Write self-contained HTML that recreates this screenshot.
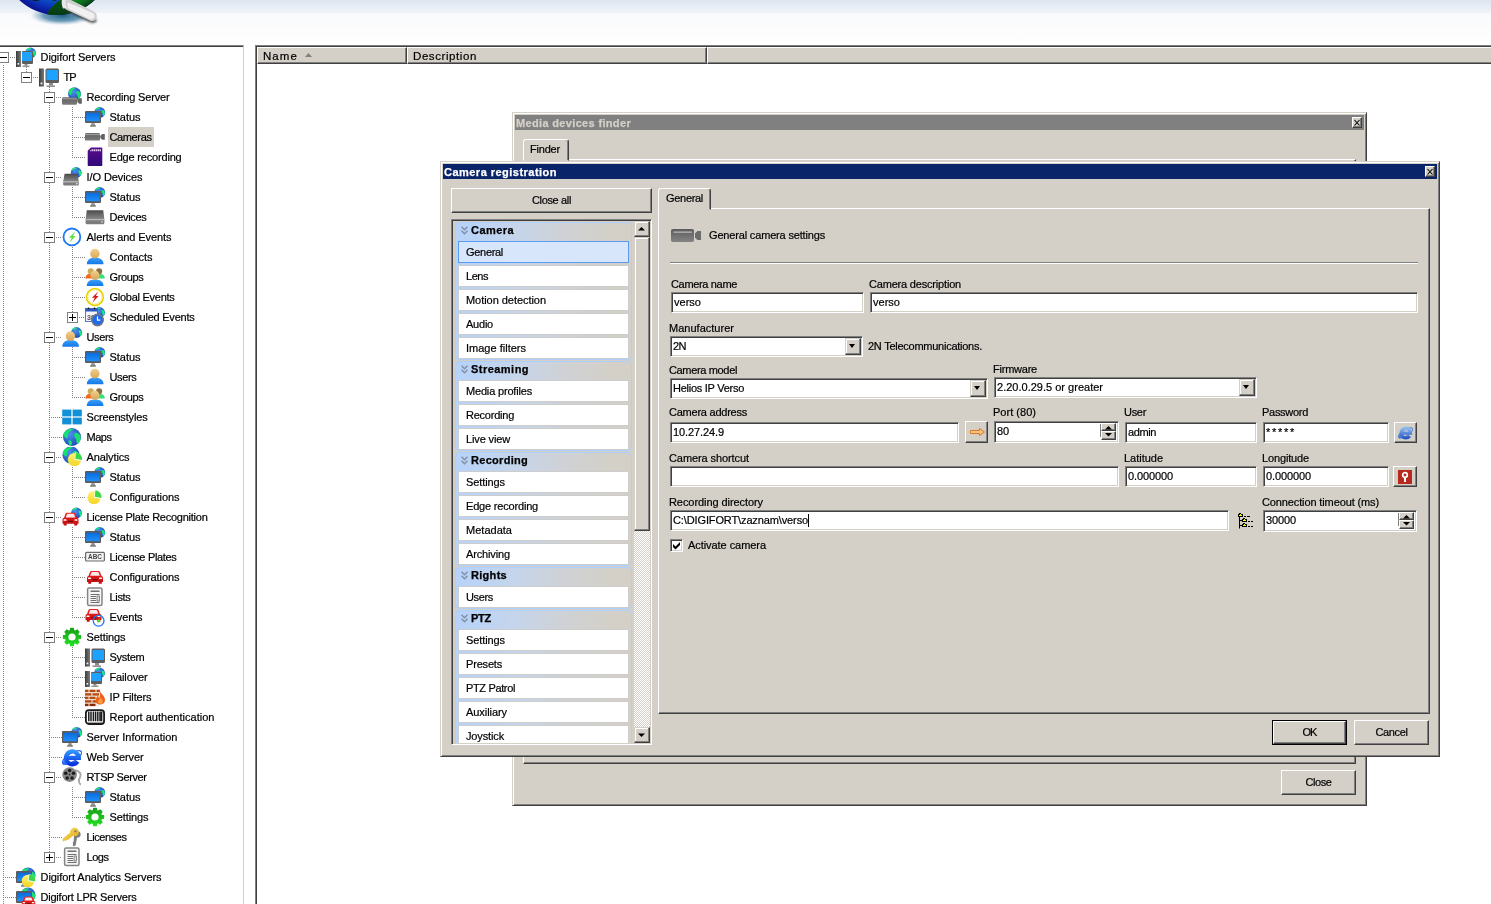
<!DOCTYPE html><html><head><meta charset="utf-8"><title>Digifort</title><style>
*{box-sizing:border-box}
html,body{margin:0;padding:0}
body{width:1491px;height:904px;overflow:hidden;background:#fff;position:relative;font-family:"Liberation Sans",sans-serif;font-size:11px;color:#000;line-height:1;-webkit-text-stroke:0.2px #000}
.abs,.ic,.tt,.hd,.vd,.xb,.lbl,.ed,.btn,.win,.cb,.grp,.gh,.it{position:absolute}
i{display:block;font-style:normal}
#root{position:absolute;left:0;top:0;width:1491px;height:904px;overflow:hidden;will-change:transform}
#topband{position:absolute;left:0;top:0;width:1491px;height:45px;background:linear-gradient(#dee5f1 0px,#e6ecf5 6px,#eef2f8 12px,#f9fafc 14px,#fcfcfd 28px,#fff 45px)}
#treep{position:absolute;left:0;top:45px;width:244px;height:859px;background:#fff;border-top:1px solid #848484;border-right:1px solid #d4d0c8;overflow:hidden}
#treep:before{content:"";position:absolute;left:0;top:0;width:243px;height:1px;background:#404040}
#tree{position:absolute;left:0;top:-46px;width:244px;height:904px}
.tt{height:20px;line-height:21px;padding:0 0 0 1.5px;white-space:pre;font-size:11px}
.tt.sel{background:#d4d0c8}
.hd{height:1px;background-image:linear-gradient(90deg,#808080 50%,transparent 50%);background-size:2px 1px}
.vd{width:1px;background-image:linear-gradient(#808080 50%,transparent 50%);background-size:1px 2px}
.xb{width:11px;height:11px;border:1px solid #808080;background:#fff;z-index:2}
.xb b{position:absolute;left:1px;top:4px;width:7px;height:1px;background:#000}
.xb u{position:absolute;left:4px;top:1px;width:1px;height:7px;background:#000}
#listp{position:absolute;left:255px;top:45px;width:1240px;height:870px;background:#fff;border:1px solid #808080;box-shadow:inset 1px 1px 0 #404040}
#hdr{position:absolute;left:1px;top:1px;height:17px;width:1240px;background:#d4d0c8}
.hc{position:absolute;top:0;height:17px;background:#d4d0c8;border:1px solid;border-color:#fff #404040 #404040 #fff;box-shadow:inset -1px -1px 0 #808080;line-height:16px;padding-left:5px;white-space:pre}
.win{background:#d4d0c8;border:1px solid;border-color:#d4d0c8 #404040 #404040 #d4d0c8;box-shadow:inset 1px 1px 0 #fff,inset -1px -1px 0 #808080}
.title{position:absolute;left:2px;top:2px;right:2px;height:15px;color:#fff;font-weight:bold;line-height:17px;height:15px;padding-left:1px;white-space:pre;font-size:11px;-webkit-text-stroke:0.25px}
.close{position:absolute;right:2px;top:2px;width:10px;height:11px;background:#d4d0c8;border:1px solid;border-color:#fff #404040 #404040 #fff;box-shadow:inset -1px -1px 0 #808080}
.btn{background:#d4d0c8;border:1px solid;border-color:#fff #404040 #404040 #fff;box-shadow:inset -1px -1px 0 #808080,inset 1px 1px 0 #d4d0c8;text-align:center;white-space:pre}
.btn.sb{border-color:#d4d0c8 #404040 #404040 #d4d0c8;box-shadow:inset -1px -1px 0 #808080,inset 1px 1px 0 #fff}
.ed{background:#fff;border:1px solid;border-color:#808080 #fff #fff #808080;box-shadow:inset 1px 1px 0 #404040,inset -1px -1px 0 #d4d0c8;white-space:pre;padding-left:2px;overflow:hidden}
.lbl{white-space:pre;height:13px;line-height:13px}
.tab{position:absolute;background:#d4d0c8;border:1px solid;border-color:#fff #404040 transparent #fff;border-radius:3px 3px 0 0;box-shadow:inset -1px 0 0 #808080;text-align:left;white-space:pre}
.page{position:absolute;border:1px solid;border-color:#fff #404040 #404040 #fff;box-shadow:inset -1px -1px 0 #808080}
.dd{position:absolute;width:16px;background:#d4d0c8;border:1px solid;border-color:#d4d0c8 #404040 #404040 #d4d0c8;box-shadow:inset -1px -1px 0 #808080,inset 1px 1px 0 #fff}
.dd:after{content:"";position:absolute;left:3px;top:5px;width:0;height:0;border-style:solid;border-color:#000 transparent transparent transparent;border-width:4px 3.5px 0 3.5px}
.grp{left:455px;width:177px;border:1px solid #acd0ff;border-radius:4px;background:linear-gradient(90deg,#b6d3fa 0%,#c6d5ea 35%,#d0d1d3 65%,#d4d0c8 90%)}
.gh{left:456px;width:175px;height:18px;font-weight:bold;font-size:11px;line-height:17px;-webkit-text-stroke:0.25px #000}
.gh .chev{position:absolute;left:5px;top:4px}
.gh span{position:absolute;left:15px;top:0;white-space:pre}
.it{left:458px;width:171px;height:22px;background:#fff;border:1px solid #cdcdcd;line-height:20px;padding-left:7px;white-space:pre}
.it.sel{background:#d8e6fc;border-color:#5a9cf2}
</style></head><body><div id="root">
<svg width="0" height="0" style="position:absolute"><defs>
<linearGradient id="gGray" x1="0" y1="0" x2="0" y2="1"><stop offset="0" stop-color="#4a4a4a"/><stop offset="1" stop-color="#8a8a8a"/></linearGradient>
<linearGradient id="gGrayH" x1="0" y1="0" x2="1" y2="0"><stop offset="0" stop-color="#3c3c3c"/><stop offset="1" stop-color="#7a7a7a"/></linearGradient>
<linearGradient id="gScr" x1="0" y1="0" x2="0" y2="1"><stop offset="0" stop-color="#0a6ad6"/><stop offset="1" stop-color="#1e90ff"/></linearGradient>
<radialGradient id="gGlobe" cx="0.4" cy="0.35" r="0.7"><stop offset="0" stop-color="#4f8ff0"/><stop offset="1" stop-color="#1a48b8"/></radialGradient>
<linearGradient id="gSD" x1="0" y1="0" x2="0" y2="1"><stop offset="0" stop-color="#5a0a8c"/><stop offset="1" stop-color="#2e0a7a"/></linearGradient>
<linearGradient id="gSkin" x1="0" y1="0" x2="0" y2="1"><stop offset="0" stop-color="#f2cf8c"/><stop offset="1" stop-color="#d9a65a"/></linearGradient>
<linearGradient id="gBlue" x1="0" y1="0" x2="0" y2="1"><stop offset="0" stop-color="#3aa0ff"/><stop offset="1" stop-color="#1478e6"/></linearGradient>
<linearGradient id="gGreen" x1="0" y1="0" x2="0" y2="1"><stop offset="0" stop-color="#18a018"/><stop offset="1" stop-color="#22e022"/></linearGradient>
<linearGradient id="gRed" x1="0" y1="0" x2="0" y2="1"><stop offset="0" stop-color="#f02020"/><stop offset="1" stop-color="#c01010"/></linearGradient>
<linearGradient id="gYel" x1="0" y1="0" x2="0" y2="1"><stop offset="0" stop-color="#fff27a"/><stop offset="1" stop-color="#f5d420"/></linearGradient>
<linearGradient id="gIE" x1="0" y1="0" x2="0" y2="1"><stop offset="0" stop-color="#2f92ff"/><stop offset="1" stop-color="#0a34e0"/></linearGradient><linearGradient id="gIE2" x1="0" y1="0" x2="0" y2="1"><stop offset="0" stop-color="#8ab8f2"/><stop offset="1" stop-color="#2a58c4"/></linearGradient><linearGradient id="gGray2" x1="0" y1="0" x2="0" y2="1"><stop offset="0" stop-color="#5c5c5c"/><stop offset="1" stop-color="#848484"/></linearGradient><linearGradient id="gKey" x1="0" y1="0" x2="1" y2="1"><stop offset="0" stop-color="#ffe36a"/><stop offset="1" stop-color="#d9a514"/></linearGradient>
<linearGradient id="gCam" x1="0" y1="0" x2="0" y2="1"><stop offset="0" stop-color="#5c5c5c"/><stop offset="0.2" stop-color="#9a9a9a"/><stop offset="0.35" stop-color="#686868"/><stop offset="1" stop-color="#7c7c7c"/></linearGradient>
<g id="globe_s"><circle cx="0" cy="0" r="5.400" fill="url(#gGlobe)"/><path d="M-4.400 -3C-3 -5 -0.500 -5.300 1 -4.600C0 -3.700 -1.600 -3.600 -2.600 -2.800C-3.200 -2.200 -3.800 -2.200 -4.400 -3Z" fill="#14ee78"/><path d="M2.400 -2.400C3.600 -2.800 4.800 -1.800 5.100 -0.200C5.400 1.600 4.600 3.200 3.400 4C3 3 3.400 1.800 2.800 0.800C2.200 -0.200 2 -1.400 2.400 -2.400Z" fill="#14ee78"/></g>
<g id="globe_m"><circle cx="0" cy="0" r="6.5" fill="url(#gGlobe)"/><path d="M-5.6 -3.2C-4 -5.8 -1 -6.4 0.8 -5.6C-0.4 -4.4 -1.8 -3.8 -2.4 -2.2C-2.8 -0.8 -2.6 0.8 -3.6 1.6C-4.6 1.2 -5.8 0 -6.2 -1.2Z" fill="#18e070"/><path d="M2 -2.6C3.6 -3.4 5.4 -2.4 6.2 -0.4C6.6 2 5.6 4.2 3.8 5.2C3 3.8 3.6 2 2.6 0.8C1.8 -0.2 1.4 -1.6 2 -2.6Z" fill="#18e070"/></g>
<g id="mon_s"><rect x="0" y="4" width="16" height="12" rx="1" fill="#5e5a58"/><rect x="1.200" y="5.600" width="13.600" height="8.600" fill="url(#gScr)"/><path d="M6.500 16H9.500L10 17.500H6Z" fill="#a0a0a0"/><path d="M5 19.800C5 17.800 6.500 17.200 8 17.200C9.500 17.200 11 17.800 11 19.800Z" fill="#808080"/></g>
<g id="tower"><rect x="0" y="0" width="5" height="16" fill="url(#gGrayH)"/><rect x="1.500" y="12" width="1.600" height="1.600" fill="#eee"/></g>
<g id="car"><path d="M3.500 8.500L5 4.600C5.300 3.800 6 3.500 6.800 3.500H13.200C14 3.500 14.700 3.800 15 4.600L16.500 8.500C17.600 8.800 18 9.500 18 10.500V14.500H16.800V16.200H13.800V14.500H6.200V16.200H3.200V14.500H2V10.500C2 9.500 2.400 8.800 3.500 8.500Z" fill="url(#gRed)"/><path d="M5.200 8.200L6.300 5.200C6.400 4.800 6.700 4.600 7.100 4.600H12.900C13.300 4.600 13.600 4.800 13.700 5.200L14.800 8.200Z" fill="#fbeaea"/><rect x="3" y="10" width="3" height="1.600" rx="0.500" fill="#fff"/><rect x="14" y="10" width="3" height="1.600" rx="0.500" fill="#fff"/><rect x="7.500" y="11.500" width="5" height="1.300" fill="#7a0808"/></g>
<g id="person"><path d="M1.800 17.200C1.800 12.600 5 10.400 10 10.400C15 10.400 18.500 12.600 18.500 17.200Z" fill="url(#gBlue)"/><ellipse cx="9.900" cy="6.600" rx="4.700" ry="4.900" fill="url(#gSkin)"/></g>
<g id="pie"><circle cx="0" cy="0" r="6.600" fill="url(#gYel)"/><path d="M0 0L0.800 -7.400A7.400 7.400 0 0 1 7.300 1.600Z" fill="#fff"/><path d="M0.800 -0.800L1.400 -7.200A7 7 0 0 1 7.600 0.400Z" fill="#38d848"/></g>
<g id="bolt"><path d="M3 -5.600L-3.200 0.600H-0.400L-2.800 5.600L3.400 -1.200H0.600Z"/></g>
<symbol id="i_srvmon_g" viewBox="0 0 20 20" overflow="visible"><use href="#globe_s" x="14.5" y="6"/><use href="#tower" x="0" y="4"/><rect x="6" y="4" width="11" height="13" rx="1" fill="#5e5e5e"/><rect x="6" y="5" width="10" height="9" fill="#1ea2ff"/><path d="M8.500 17H11.500V18.600H8.500Z" fill="#8a8a8a"/><rect x="6.500" y="18.600" width="7" height="1.200" fill="#7a7a7a"/></symbol><symbol id="i_srvmon_g2" viewBox="0 0 20 20" overflow="visible"><use href="#globe_s" x="14.500" y="6"/><use href="#tower" x="0" y="4"/><rect x="6" y="5" width="11" height="12" rx="1" fill="#5e5e5e"/><rect x="6" y="6" width="10" height="8" fill="#1ea2ff"/><path d="M8.500 17H11.500V18.600H8.500Z" fill="#8a8a8a"/><rect x="6.500" y="18.600" width="7" height="1.200" fill="#7a7a7a"/></symbol><symbol id="i_srvmon" viewBox="0 0 20 20" overflow="visible"><rect x="0" y="1.500" width="5" height="18" fill="url(#gGrayH)"/><rect x="1.500" y="15.500" width="1.800" height="1.800" fill="#eee"/><rect x="6.500" y="1.500" width="13.500" height="14.500" rx="1.500" fill="#5e5e5e"/><rect x="7.500" y="3" width="11.500" height="10" fill="#1ea2ff"/><path d="M10 16H14V18.500H10Z" fill="#8a8a8a"/><rect x="7.500" y="18.500" width="8.500" height="1.300" fill="#7a7a7a"/></symbol><symbol id="i_cam_g" viewBox="0 0 20 20" overflow="visible"><use href="#globe_m" x="12.500" y="6.800"/><rect x="0" y="10.2" width="15" height="7.600" rx="1.200" fill="url(#gCam)"/><path d="M15.300 13L17.300 11.2H19.800V16.8H17.300L15.300 15Z" fill="#626262"/></symbol><symbol id="i_cam" viewBox="0 0 20 20" overflow="visible"><rect x="0" y="6" width="15" height="7.600" rx="1.200" fill="url(#gCam)"/><path d="M15.300 8.8L17.300 7H19.800V12.8H17.300L15.300 11Z" fill="#626262"/></symbol><symbol id="i_cam_big" viewBox="0 0 32 20" overflow="visible"><rect x="1" y="4" width="23" height="13" rx="1.800" fill="url(#gGray2)"/><rect x="3.500" y="6.600" width="18.500" height="1" fill="#d2cec8"/><path d="M25 8.200L27.500 6H31V15H27.500L25 12.800Z" fill="#6c6c6c"/></symbol><symbol id="i_mon_g" viewBox="0 0 20 20" overflow="visible"><use href="#globe_s" x="14.700" y="5.400"/><use href="#mon_s"/></symbol><symbol id="i_sd" viewBox="0 0 20 20" overflow="visible"><path d="M6 0.500H16.300C16.900 0.500 17.300 0.900 17.300 1.500V18C17.300 18.600 16.900 19 16.300 19H3.700C3.100 19 2.700 18.600 2.700 18V3.800Z" fill="url(#gSD)"/><path d="M5 3.200h0.800v1H5zM6.600 2.200h1.200v2H6.600zM8.600 2.200h1.200v2H8.600zM10.600 2.200h1.200v2h-1.200zM12.600 2.200h1.200v2h-1.200zM14.600 2.200h1.200v2h-1.200z" fill="#fff"/></symbol><symbol id="i_dev_g" viewBox="0 0 20 20" overflow="visible"><use href="#globe_s" x="14.200" y="5.500"/><path d="M2.6 6.8H15.6L16.8 14.6H1.2Z" fill="url(#gGray)"/><path d="M1.2 14.6H16.8V17C16.8 18.6 15.8 18.6 15.8 18.6H2.2C1.2 18.6 1.2 17 1.2 17Z" fill="#7c7c7c"/><rect x="1.2" y="14.6" width="15.6" height="0.800" fill="#c8c8c8"/><circle cx="14.8" cy="16.8" r="0.700" fill="#fff"/></symbol><symbol id="i_dev" viewBox="0 0 20 20" overflow="visible"><path d="M1.8 3.2H18.2L19.4 12.4H0.6Z" fill="url(#gGray)"/><path d="M0.6 12.4H19.4V15.4C19.4 17.2 18.2 17.2 18.2 17.2H1.8C0.6 17.2 0.6 15.4 0.6 15.4Z" fill="#7c7c7c"/><rect x="0.6" y="12.4" width="18.8" height="0.800" fill="#c8c8c8"/><circle cx="17" cy="15" r="0.700" fill="#fff"/></symbol><symbol id="i_alert" viewBox="0 0 20 20" overflow="visible"><circle cx="9.900" cy="9.900" r="8.400" fill="#fff" stroke="#1e78f5" stroke-width="1.800"/><use href="#bolt" x="10.200" y="10.100" fill="#5ae03a"/></symbol><symbol id="i_gevent" viewBox="0 0 20 20" overflow="visible"><circle cx="9.900" cy="10" r="8.400" fill="#fff" stroke="#e6d40a" stroke-width="1.700"/><circle cx="9.900" cy="10" r="7.100" fill="none" stroke="#f4ea70" stroke-width="0.800"/><use href="#bolt" x="10.200" y="10.100" fill="#d81818"/></symbol><symbol id="i_person" viewBox="0 0 20 20" overflow="visible"><use href="#person"/></symbol><symbol id="i_person_g" viewBox="0 0 20 20" overflow="visible"><use href="#globe_s" x="14.500" y="5.500"/><g transform="translate(-1.500,2.500)"><use href="#person"/></g></symbol><symbol id="i_group" viewBox="0 0 20 20" overflow="visible"><path d="M0.400 11.400C0.400 8.600 2.200 6.800 5.500 6.800L7.500 11.400Z" fill="#f06a1a"/><path d="M19.800 11.400C19.800 8.600 18 6.800 14.500 6.800L12.500 11.400Z" fill="#38e070"/><ellipse cx="5.800" cy="4.300" rx="3.100" ry="3.100" fill="#c8ae5c"/><ellipse cx="14.100" cy="4.300" rx="3.100" ry="3.100" fill="#8a7040"/><path d="M1.800 18.900C1.800 14.400 5 12.400 10 12.400C15 12.400 18.500 14.400 18.500 18.900Z" fill="url(#gBlue)"/><ellipse cx="9.950" cy="8.200" rx="4.450" ry="4.650" fill="url(#gSkin)"/></symbol><symbol id="i_sched" viewBox="0 0 20 20" overflow="visible"><use href="#globe_s" x="14.500" y="5.500"/><rect x="0.500" y="1.500" width="12" height="13" fill="#f4f4f8" stroke="#2a5cc0" stroke-width="0.800"/><rect x="0.500" y="1.500" width="12" height="3" fill="#2a5cc0"/><circle cx="3.500" cy="1.300" r="0.900" fill="#111"/><circle cx="9.500" cy="1.300" r="0.900" fill="#111"/><text x="2" y="12.500" font-size="7" font-family="Liberation Sans" font-weight="bold" fill="#555">30</text><circle cx="12.500" cy="13" r="5.800" fill="#1e6af0" stroke="#777" stroke-width="1.400"/><path d="M12.500 9.600V13.200H15.300" fill="none" stroke="#fff" stroke-width="1.200"/></symbol><symbol id="i_win" viewBox="0 0 20 20" overflow="visible"><rect x="0.200" y="2.600" width="9.200" height="6.800" fill="#1190d8"/><rect x="10.600" y="2.600" width="9.200" height="6.800" fill="#1190d8"/><rect x="0.200" y="10.600" width="9.200" height="6.800" fill="#1190d8"/><rect x="10.600" y="10.600" width="9.200" height="6.800" fill="#1190d8"/></symbol><symbol id="i_globe" viewBox="0 0 20 20" overflow="visible"><circle cx="10" cy="10" r="9" fill="url(#gGlobe)"/><path d="M2.200 5.600C4.400 2.200 8.600 1 11.400 2C9.600 3.800 7.400 4.400 6.400 6.600C5.800 8.400 6.400 10.400 5 11.600C3.400 11 1.800 9.600 1.400 7.800Z" fill="#18e070"/><path d="M12.600 6.200C14.800 5 17.400 6.400 18.500 9.200C19.200 12.400 17.800 15.600 15.200 17C14 15 14.800 12.600 13.400 11C12.200 9.600 11.800 7.600 12.600 6.200Z" fill="#18e070"/><path d="M6.500 13.500C8 13 9.500 14 10 15.500C10.300 17 9.500 18.300 8.500 18.800C7 18 6 15.500 6.500 13.500Z" fill="#18e070"/></symbol><symbol id="i_globe_pie" viewBox="0 0 20 20" overflow="visible"><g transform="translate(-0.500,-1.500) scale(0.95)"><circle cx="10" cy="10" r="9" fill="url(#gGlobe)"/><path d="M2.200 5.600C4.400 2.200 8.600 1 11.400 2C9.600 3.800 7.400 4.400 6.400 6.600C5.800 8.400 6.400 10.400 5 11.600C3.400 11 1.800 9.600 1.400 7.800Z" fill="#18e070"/><path d="M12.600 6.200C14.800 5 17.400 6.400 18.500 9.200C19.200 12.400 17.800 15.600 15.200 17C14 15 14.800 12.600 13.400 11C12.200 9.600 11.800 7.600 12.600 6.200Z" fill="#18e070"/><path d="M6.500 13.500C8 13 9.500 14 10 15.500C10.300 17 9.500 18.300 8.500 18.800C7 18 6 15.500 6.500 13.500Z" fill="#18e070"/></g><use href="#pie" x="12.500" y="12.500"/></symbol><symbol id="i_pie" viewBox="0 0 20 20" overflow="visible"><use href="#pie" x="9" y="10.500"/></symbol><symbol id="i_car_g" viewBox="0 0 20 20" overflow="visible"><use href="#globe_s" x="14.500" y="6"/><g transform="translate(-1.500,2.200)"><use href="#car"/></g></symbol><symbol id="i_car" viewBox="0 0 20 20" overflow="visible"><g transform="translate(0,0.500)"><use href="#car"/></g></symbol><symbol id="i_car_ev" viewBox="0 0 20 20" overflow="visible"><g transform="translate(-1.500,-1.500)"><use href="#car"/></g><circle cx="13.600" cy="13.800" r="5.400" fill="none" stroke="#1e78f5" stroke-width="1.300"/><g transform="translate(13.700,13.800) scale(0.62)"><use href="#bolt" fill="#5ae03a"/></g></symbol><symbol id="i_abc" viewBox="0 0 20 20" overflow="visible"><rect x="0.600" y="5.400" width="18.800" height="8.600" rx="1" fill="#f2f2f2" stroke="#6a6a6a" stroke-width="1.200"/><text x="10" y="12.200" text-anchor="middle" font-size="6.400" font-weight="bold" font-family="Liberation Sans" fill="#444">ABC</text></symbol><symbol id="i_list" viewBox="0 0 20 20" overflow="visible"><rect x="2.600" y="1" width="14.400" height="17.600" rx="1.500" fill="#f6f6f6" stroke="#858585" stroke-width="1.500"/><path d="M5.500 4.200H14.500" stroke="#666" stroke-width="1.400"/><path d="M5.500 7.500H14.500M5.500 9.500H11M5.500 11.500H11M5.500 13.500H11M5.500 15.500H14.500" stroke="#707070" stroke-width="1"/><rect x="12" y="9" width="2.500" height="5" fill="#ddd" stroke="#707070" stroke-width="0.800"/></symbol><symbol id="i_gear" viewBox="0 0 20 20" overflow="visible"><path d="M8.64 1.41L11.36 1.41L11.64 3.61L13.36 4.32L15.11 2.96L17.04 4.89L15.68 6.64L16.39 8.36L18.59 8.64L18.59 11.36L16.39 11.64L15.68 13.36L17.04 15.11L15.11 17.04L13.36 15.68L11.64 16.39L11.36 18.59L8.64 18.59L8.36 16.39L6.64 15.68L4.89 17.04L2.96 15.11L4.32 13.36L3.61 11.64L1.41 11.36L1.41 8.64L3.61 8.36L4.32 6.64L2.96 4.89L4.89 2.96L6.64 4.32L8.36 3.61Z" fill="url(#gGreen)" stroke="url(#gGreen)" stroke-width="1.200" stroke-linejoin="round"/><circle cx="10" cy="10" r="3.600" fill="#fff"/></symbol><symbol id="i_fire" viewBox="0 0 20 20" overflow="visible"><g transform="translate(0,1.800) scale(1,0.92)"><rect x="0" y="0.500" width="14.500" height="18.500" fill="#f4ece0"/><g fill="#b84a14"><rect x="0" y="1" width="3.500" height="2.600"/><rect x="4.500" y="1" width="6" height="2.600"/><rect x="11.500" y="1" width="3.500" height="2.600"/><rect x="0" y="4.800" width="6.500" height="2.600"/><rect x="7.500" y="4.800" width="6.500" height="2.600"/><rect x="0" y="8.600" width="3.500" height="2.600"/><rect x="4.500" y="8.600" width="6" height="2.600"/><rect x="0" y="12.400" width="6.500" height="2.600"/><rect x="7.500" y="12.400" width="5" height="2.600"/><rect x="0" y="16.200" width="3.500" height="2.600" fill="#8a2a08"/><rect x="4.500" y="16.200" width="6" height="2.600" fill="#8a2a08"/></g></g><path d="M14.500 4C17 7.500 20 9.500 20 13C20 16 17.500 17.500 15 17.500C12.500 17.500 10.500 16 10.500 13.500C10.500 11.500 12 10.500 12.500 8.500C13.500 9.500 14 10.500 14 11.500C15 9.500 15.200 7 14.500 4Z" fill="#f0601a"/><path d="M15.200 10.500C16.500 12 17.800 13 17.800 14.600C17.800 16 16.600 16.800 15.400 16.800C14 16.800 13 16 13 14.800C13 13.500 14.800 12.500 15.200 10.500Z" fill="#f8a040"/></symbol><symbol id="i_barcode" viewBox="0 0 20 20" overflow="visible"><rect x="0.900" y="3.200" width="18.200" height="13.800" rx="3" fill="#fff" stroke="#1a1a1a" stroke-width="1.800"/><path d="M3.800 4.500V14.300M6 4.500V14.300M8.400 4.500V14.300M10.600 4.500V14.300M12.800 4.500V14.300M15 4.500V14.300M16.600 4.500V14.300" stroke="#1a1a1a" stroke-width="1.500"/><path d="M3.500 15.600H16.500" stroke="#444" stroke-width="1" stroke-dasharray="1 1"/></symbol><symbol id="i_ie" viewBox="0 0 20 20" overflow="visible"><ellipse cx="10" cy="10.500" rx="11" ry="4.200" transform="rotate(-32 10 10.500)" fill="none" stroke="#2a6cf2" stroke-width="1.300"/><path d="M15.600 14.600A6.400 6.400 0 1 1 16.800 10.800H6" fill="none" stroke="url(#gIE)" stroke-width="4.300"/><path d="M1.200 17.600C0.200 15.600 1.800 12.800 3.600 11C3 13.400 3.400 15.600 5.200 16.800C3.800 17.800 2 18.400 1.200 17.600Z" fill="#2a6cf2"/></symbol><symbol id="i_reel" viewBox="0 0 20 20" overflow="visible"><path d="M13 3.200C17.500 3.600 19.600 7 18 10.200C16.600 12.800 16 15.400 18.800 17.800" fill="none" stroke="#a8a8a8" stroke-width="1.900"/><circle cx="7.600" cy="7.600" r="7.300" fill="#848484"/><circle cx="7.600" cy="7.600" r="0.900" fill="#333"/><circle cx="7.60" cy="3.50" r="1.750" fill="#1c1c1c"/><circle cx="11.50" cy="6.33" r="1.750" fill="#1c1c1c"/><circle cx="10.01" cy="10.92" r="1.750" fill="#1c1c1c"/><circle cx="5.19" cy="10.92" r="1.750" fill="#1c1c1c"/><circle cx="3.70" cy="6.33" r="1.750" fill="#1c1c1c"/></symbol><symbol id="i_key" viewBox="0 0 20 20" overflow="visible"><path d="M14.500 4.500C17 3.500 19 5.500 18.600 8C18.200 10.200 16.500 11 15 10.600L13.800 18L12 19.600L10.600 18.200L11.200 16.800L10.600 15.800L11.600 14.600L12 9Z" fill="#7e7e7e"/><path d="M10.500 1.200C13.500 -0.200 17 1.800 16.800 5.200C16.600 8.400 13.600 9.800 11.200 8.800L5.800 13L5 12.400L3.600 14L2.600 13.400L1.400 14.600L0.400 13.200L0.800 11.600L8 5.800C7.800 3.800 8.800 2 10.500 1.200Z" fill="url(#gKey)"/><circle cx="13.400" cy="4.200" r="1.300" fill="#9a8a5a"/></symbol><symbol id="i_mon_pie" viewBox="0 0 20 20" overflow="visible"><g transform="translate(12,8) scale(1.15)"><use href="#globe_m"/></g><use href="#mon_s"/><g transform="translate(12,14) scale(0.95)"><use href="#pie"/></g></symbol><symbol id="i_mon_car" viewBox="0 0 20 20" overflow="visible"><g transform="translate(12,8) scale(1.15)"><use href="#globe_m"/></g><use href="#mon_s"/><g transform="translate(4,6.500) scale(0.85)"><use href="#car"/></g></symbol><symbol id="i_treeico" viewBox="0 0 18 18" overflow="visible"><path d="M2.500 5V16.500M2.500 8.500H5.500M2.500 13.500H5.500" stroke="#000" stroke-width="1" fill="none"/><path d="M1 2H2V1H4V2H6V5H1Z" fill="#000"/><path d="M2 3H3V2H4V3H5V4H2Z" fill="#ffff00"/><path d="M5 7H6V6H8V7H10V10H5Z" fill="#000"/><path d="M6 8H7V7H8V8H9V9H6Z" fill="#ffff00"/><path d="M5 12H6V11H8V12H10V15H5Z" fill="#000"/><path d="M6 13H7V12H8V13H9V14H6Z" fill="#ffff00"/><path d="M7 4.500H9M10 4.500H13M11 9.500H13M14 9.500H16M11 14.500H13M14 14.500H16" stroke="#000" stroke-width="1"/></symbol><symbol id="logo" viewBox="0 0 110 30" overflow="visible"><defs><radialGradient id="lgS" cx="0.5" cy="0.5" r="0.5"><stop offset="0" stop-color="#1f5f86" stop-opacity="1"/><stop offset="0.55" stop-color="#3f7fa3" stop-opacity="0.75"/><stop offset="0.8" stop-color="#8fb0c8" stop-opacity="0.35"/><stop offset="1" stop-color="#fff" stop-opacity="0"/></radialGradient><radialGradient id="lgB" cx="57" cy="-40" r="55" gradientUnits="userSpaceOnUse"><stop offset="0.7" stop-color="#0a5ccc"/><stop offset="0.88" stop-color="#0a2cb0"/><stop offset="1" stop-color="#0a128c"/></radialGradient><radialGradient id="lgG" cx="57" cy="-40" r="55" gradientUnits="userSpaceOnUse"><stop offset="0.7" stop-color="#12a024"/><stop offset="0.9" stop-color="#0c6a1c"/><stop offset="1" stop-color="#083c14"/></radialGradient><clipPath id="lgC"><circle cx="57" cy="-40" r="55"/></clipPath><filter id="bl" x="-20%" y="-20%" width="140%" height="140%"><feGaussianBlur stdDeviation="1.3"/></filter></defs><ellipse cx="62" cy="15.500" rx="34" ry="10.500" fill="url(#lgS)"/><circle cx="57" cy="-40" r="55" fill="url(#lgB)"/><g clip-path="url(#lgC)"><path d="M47 14C49 9 53 6 56 3C58 1 60 0 63 -1L110 -1V30H47Z" fill="url(#lgG)"/><path d="M47 14C49 9 53 6 56 3C58 1 60 0 63 -1L68 -1C66 4 66 10 70 16L47 16Z" fill="#073a14" opacity="0.75"/><path d="M0 -1H11C9 1.800 3 2.200 0 1Z M31 -1H41C39 1.800 33 1.800 31 -1Z M50 -1H58C57 1.200 52 1.200 50 -1Z" fill="#151515"/></g><g filter="url(#bl)"><path d="M63 2L95 18.500C99 21 95 24 90 22.500L66 11Z" fill="#333" opacity="0.8"/></g><path d="M62 -1L69 -1L94 11.500C99 14.500 97 22 91 21L66 9.500C63 7 64 4 65 2Z" fill="#cfcfcf"/><path d="M68 2.500L93 13C96 15.500 94 20 90.500 19.500L69 9C67 6.500 67 4 68 2.500Z" fill="#f0f0f0"/><path d="M62 -1L66 -1C65 2 65.500 5 67 8L63 8.500C61.500 5 61.500 2 62 -1Z" fill="#e8e8e8"/></symbol></defs></svg>
<div id="topband"></div>
<svg class="abs" style="left:0;top:0" width="110" height="30" viewBox="0 0 110 30"><use href="#logo"/></svg>
<div id="treep"><div id="tree"><i class="hd" style="left:10px;top:57px;width:5px"></i>
<i class="xb" style="left:-2px;top:52px"><b></b></i>
<svg class="ic" style="left:16px;top:47px" width="20" height="20"><use href="#i_srvmon_g"/></svg>
<span class="tt" style="left:39px;top:47px;width:79px;letter-spacing:-0.05px">Digifort Servers</span>
<i class="hd" style="left:33px;top:77px;width:5px"></i>
<i class="xb" style="left:21px;top:72px"><b></b></i>
<svg class="ic" style="left:39px;top:67px" width="20" height="20"><use href="#i_srvmon"/></svg>
<span class="tt" style="left:62px;top:67px;width:16px;letter-spacing:-1.028px">TP</span>
<i class="hd" style="left:56px;top:97px;width:5px"></i>
<i class="xb" style="left:44px;top:92px"><b></b></i>
<svg class="ic" style="left:62px;top:87px" width="20" height="20"><use href="#i_cam_g"/></svg>
<span class="tt" style="left:85px;top:87px;width:87px;letter-spacing:-0.162px">Recording Server</span>
<i class="hd" style="left:74px;top:117px;width:11px"></i>
<svg class="ic" style="left:85px;top:107px" width="20" height="20"><use href="#i_mon_g"/></svg>
<span class="tt" style="left:108px;top:107px;width:35px;letter-spacing:-0.031px">Status</span>
<i class="hd" style="left:74px;top:137px;width:11px"></i>
<svg class="ic" style="left:85px;top:127px" width="20" height="20"><use href="#i_cam"/></svg>
<span class="tt sel" style="left:108px;top:127px;width:46px;letter-spacing:-0.374px">Cameras</span>
<i class="hd" style="left:74px;top:157px;width:11px"></i>
<svg class="ic" style="left:85px;top:147px" width="20" height="20"><use href="#i_sd"/></svg>
<span class="tt" style="left:108px;top:147px;width:76px;letter-spacing:-0.186px">Edge recording</span>
<i class="hd" style="left:56px;top:177px;width:5px"></i>
<i class="xb" style="left:44px;top:172px"><b></b></i>
<svg class="ic" style="left:62px;top:167px" width="20" height="20"><use href="#i_dev_g"/></svg>
<span class="tt" style="left:85px;top:167px;width:60px;letter-spacing:-0.077px">I/O Devices</span>
<i class="hd" style="left:74px;top:197px;width:11px"></i>
<svg class="ic" style="left:85px;top:187px" width="20" height="20"><use href="#i_mon_g"/></svg>
<span class="tt" style="left:108px;top:187px;width:35px;letter-spacing:-0.031px">Status</span>
<i class="hd" style="left:74px;top:217px;width:11px"></i>
<svg class="ic" style="left:85px;top:207px" width="20" height="20"><use href="#i_dev"/></svg>
<span class="tt" style="left:108px;top:207px;width:41px;letter-spacing:-0.303px">Devices</span>
<i class="hd" style="left:56px;top:237px;width:5px"></i>
<i class="xb" style="left:44px;top:232px"><b></b></i>
<svg class="ic" style="left:62px;top:227px" width="20" height="20"><use href="#i_alert"/></svg>
<span class="tt" style="left:85px;top:227px;width:89px;letter-spacing:-0.071px">Alerts and Events</span>
<i class="hd" style="left:74px;top:257px;width:11px"></i>
<svg class="ic" style="left:85px;top:247px" width="20" height="20"><use href="#i_person"/></svg>
<span class="tt" style="left:108px;top:247px;width:47px;letter-spacing:-0.051px">Contacts</span>
<i class="hd" style="left:74px;top:277px;width:11px"></i>
<svg class="ic" style="left:85px;top:267px" width="20" height="20"><use href="#i_group"/></svg>
<span class="tt" style="left:108px;top:267px;width:38px;letter-spacing:-0.345px">Groups</span>
<i class="hd" style="left:74px;top:297px;width:11px"></i>
<svg class="ic" style="left:85px;top:287px" width="20" height="20"><use href="#i_gevent"/></svg>
<span class="tt" style="left:108px;top:287px;width:69px;letter-spacing:-0.268px">Global Events</span>
<i class="hd" style="left:79px;top:317px;width:5px"></i>
<i class="xb" style="left:67px;top:312px"><b></b><u></u></i>
<svg class="ic" style="left:85px;top:307px" width="20" height="20"><use href="#i_sched"/></svg>
<span class="tt" style="left:108px;top:307px;width:89px;letter-spacing:-0.229px">Scheduled Events</span>
<i class="hd" style="left:56px;top:337px;width:5px"></i>
<i class="xb" style="left:44px;top:332px"><b></b></i>
<svg class="ic" style="left:62px;top:327px" width="20" height="20"><use href="#i_person_g"/></svg>
<span class="tt" style="left:85px;top:327px;width:31px;letter-spacing:-0.345px">Users</span>
<i class="hd" style="left:74px;top:357px;width:11px"></i>
<svg class="ic" style="left:85px;top:347px" width="20" height="20"><use href="#i_mon_g"/></svg>
<span class="tt" style="left:108px;top:347px;width:35px;letter-spacing:-0.031px">Status</span>
<i class="hd" style="left:74px;top:377px;width:11px"></i>
<svg class="ic" style="left:85px;top:367px" width="20" height="20"><use href="#i_person"/></svg>
<span class="tt" style="left:108px;top:367px;width:31px;letter-spacing:-0.345px">Users</span>
<i class="hd" style="left:74px;top:397px;width:11px"></i>
<svg class="ic" style="left:85px;top:387px" width="20" height="20"><use href="#i_group"/></svg>
<span class="tt" style="left:108px;top:387px;width:38px;letter-spacing:-0.345px">Groups</span>
<i class="hd" style="left:51px;top:417px;width:11px"></i>
<svg class="ic" style="left:62px;top:407px" width="20" height="20"><use href="#i_win"/></svg>
<span class="tt" style="left:85px;top:407px;width:65px;letter-spacing:-0.164px">Screenstyles</span>
<i class="hd" style="left:51px;top:437px;width:11px"></i>
<svg class="ic" style="left:62px;top:427px" width="20" height="20"><use href="#i_globe"/></svg>
<span class="tt" style="left:85px;top:427px;width:29px;letter-spacing:-0.474px">Maps</span>
<i class="hd" style="left:56px;top:457px;width:5px"></i>
<i class="xb" style="left:44px;top:452px"><b></b></i>
<svg class="ic" style="left:62px;top:447px" width="20" height="20"><use href="#i_globe_pie"/></svg>
<span class="tt" style="left:85px;top:447px;width:47px;letter-spacing:-0.113px">Analytics</span>
<i class="hd" style="left:74px;top:477px;width:11px"></i>
<svg class="ic" style="left:85px;top:467px" width="20" height="20"><use href="#i_mon_g"/></svg>
<span class="tt" style="left:108px;top:467px;width:35px;letter-spacing:-0.031px">Status</span>
<i class="hd" style="left:74px;top:497px;width:11px"></i>
<svg class="ic" style="left:85px;top:487px" width="20" height="20"><use href="#i_pie"/></svg>
<span class="tt" style="left:108px;top:487px;width:74px;letter-spacing:-0.066px">Configurations</span>
<i class="hd" style="left:56px;top:517px;width:5px"></i>
<i class="xb" style="left:44px;top:512px"><b></b></i>
<svg class="ic" style="left:62px;top:507px" width="20" height="20"><use href="#i_car_g"/></svg>
<span class="tt" style="left:85px;top:507px;width:125px;letter-spacing:-0.247px">License Plate Recognition</span>
<i class="hd" style="left:74px;top:537px;width:11px"></i>
<svg class="ic" style="left:85px;top:527px" width="20" height="20"><use href="#i_mon_g"/></svg>
<span class="tt" style="left:108px;top:527px;width:35px;letter-spacing:-0.031px">Status</span>
<i class="hd" style="left:74px;top:557px;width:11px"></i>
<svg class="ic" style="left:85px;top:547px" width="20" height="20"><use href="#i_abc"/></svg>
<span class="tt" style="left:108px;top:547px;width:71px;letter-spacing:-0.324px">License Plates</span>
<i class="hd" style="left:74px;top:577px;width:11px"></i>
<svg class="ic" style="left:85px;top:567px" width="20" height="20"><use href="#i_car"/></svg>
<span class="tt" style="left:108px;top:567px;width:74px;letter-spacing:-0.066px">Configurations</span>
<i class="hd" style="left:74px;top:597px;width:11px"></i>
<svg class="ic" style="left:85px;top:587px" width="20" height="20"><use href="#i_list"/></svg>
<span class="tt" style="left:108px;top:587px;width:25px;letter-spacing:-0.323px">Lists</span>
<i class="hd" style="left:74px;top:617px;width:11px"></i>
<svg class="ic" style="left:85px;top:607px" width="20" height="20"><use href="#i_car_ev"/></svg>
<span class="tt" style="left:108px;top:607px;width:37px;letter-spacing:-0.105px">Events</span>
<i class="hd" style="left:56px;top:637px;width:5px"></i>
<i class="xb" style="left:44px;top:632px"><b></b></i>
<svg class="ic" style="left:62px;top:627px" width="20" height="20"><use href="#i_gear"/></svg>
<span class="tt" style="left:85px;top:627px;width:43px;letter-spacing:-0.093px">Settings</span>
<i class="hd" style="left:74px;top:657px;width:11px"></i>
<svg class="ic" style="left:85px;top:647px" width="20" height="20"><use href="#i_srvmon"/></svg>
<span class="tt" style="left:108px;top:647px;width:39px;letter-spacing:-0.279px">System</span>
<i class="hd" style="left:74px;top:677px;width:11px"></i>
<svg class="ic" style="left:85px;top:667px" width="20" height="20"><use href="#i_srvmon_g2"/></svg>
<span class="tt" style="left:108px;top:667px;width:42px;letter-spacing:-0.14px">Failover</span>
<i class="hd" style="left:74px;top:697px;width:11px"></i>
<svg class="ic" style="left:85px;top:687px" width="20" height="20"><use href="#i_fire"/></svg>
<span class="tt" style="left:108px;top:687px;width:46px;letter-spacing:-0.119px">IP Filters</span>
<i class="hd" style="left:74px;top:717px;width:11px"></i>
<svg class="ic" style="left:85px;top:707px" width="20" height="20"><use href="#i_barcode"/></svg>
<span class="tt" style="left:108px;top:707px;width:109px;letter-spacing:0.021px">Report authentication</span>
<i class="hd" style="left:51px;top:737px;width:11px"></i>
<svg class="ic" style="left:62px;top:727px" width="20" height="20"><use href="#i_mon_g"/></svg>
<span class="tt" style="left:85px;top:727px;width:95px;letter-spacing:0.029px">Server Information</span>
<i class="hd" style="left:51px;top:757px;width:11px"></i>
<svg class="ic" style="left:62px;top:747px" width="20" height="20"><use href="#i_ie"/></svg>
<span class="tt" style="left:85px;top:747px;width:61px;letter-spacing:-0.087px">Web Server</span>
<i class="hd" style="left:56px;top:777px;width:5px"></i>
<i class="xb" style="left:44px;top:772px"><b></b></i>
<svg class="ic" style="left:62px;top:767px" width="20" height="20"><use href="#i_reel"/></svg>
<span class="tt" style="left:85px;top:767px;width:64px;letter-spacing:-0.399px">RTSP Server</span>
<i class="hd" style="left:74px;top:797px;width:11px"></i>
<svg class="ic" style="left:85px;top:787px" width="20" height="20"><use href="#i_mon_g"/></svg>
<span class="tt" style="left:108px;top:787px;width:35px;letter-spacing:-0.031px">Status</span>
<i class="hd" style="left:74px;top:817px;width:11px"></i>
<svg class="ic" style="left:85px;top:807px" width="20" height="20"><use href="#i_gear"/></svg>
<span class="tt" style="left:108px;top:807px;width:43px;letter-spacing:-0.093px">Settings</span>
<i class="hd" style="left:51px;top:837px;width:11px"></i>
<svg class="ic" style="left:62px;top:827px" width="20" height="20"><use href="#i_key"/></svg>
<span class="tt" style="left:85px;top:827px;width:44px;letter-spacing:-0.427px">Licenses</span>
<i class="hd" style="left:56px;top:857px;width:5px"></i>
<i class="xb" style="left:44px;top:852px"><b></b><u></u></i>
<svg class="ic" style="left:62px;top:847px" width="20" height="20"><use href="#i_list"/></svg>
<span class="tt" style="left:85px;top:847px;width:26px;letter-spacing:-0.463px">Logs</span>
<i class="hd" style="left:5px;top:877px;width:11px"></i>
<svg class="ic" style="left:16px;top:867px" width="20" height="20"><use href="#i_mon_pie"/></svg>
<span class="tt" style="left:39px;top:867px;width:125px;letter-spacing:-0.048px">Digifort Analytics Servers</span>
<i class="hd" style="left:5px;top:897px;width:11px"></i>
<svg class="ic" style="left:16px;top:887px" width="20" height="20"><use href="#i_mon_car"/></svg>
<span class="tt" style="left:39px;top:887px;width:100px;letter-spacing:-0.212px">Digifort LPR Servers</span>
<i class="vd" style="left:3px;top:65px;height:840px"></i>
<i class="vd" style="left:26px;top:67px;height:11px"></i>
<i class="vd" style="left:49px;top:87px;height:771px"></i>
<i class="vd" style="left:72px;top:107px;height:51px"></i>
<i class="vd" style="left:72px;top:187px;height:31px"></i>
<i class="vd" style="left:72px;top:247px;height:71px"></i>
<i class="vd" style="left:72px;top:347px;height:51px"></i>
<i class="vd" style="left:72px;top:467px;height:31px"></i>
<i class="vd" style="left:72px;top:527px;height:91px"></i>
<i class="vd" style="left:72px;top:647px;height:71px"></i>
<i class="vd" style="left:72px;top:787px;height:31px"></i></div></div>
<div id="listp"><div id="hdr"><div class="hc" style="left:0;width:150px;font-size:11.5px;letter-spacing:1.05px">Name<svg style="position:absolute;left:47px;top:5px" width="7" height="4"><path d="M0 4L3.5 0L7 4Z" fill="#808080"/></svg></div><div class="hc" style="left:150px;width:300px;font-size:11.5px;letter-spacing:0.58px">Description</div><div class="hc" style="left:450px;width:800px"></div></div></div>
<div class="win" style="left:512px;top:112px;width:855px;height:694px"><div class="title" style="background:#808080;color:#d4d0c8;letter-spacing:0.34px">Media devices finder<i class="close"><svg width="9" height="9" style="position:absolute;left:0;top:0"><path d="M1.500 2L6.500 7.500M6.500 2L1.500 7.500" stroke="#000" stroke-width="1.100"/></svg></i></div></div>
<div class="page" style="left:523px;top:159px;width:833px;height:605px"></div>
<div class="tab" style="left:523px;top:139px;width:46px;height:22px;padding:4px 0 0 6px;letter-spacing:-0.196px">Finder</div>
<div class="btn" style="left:1281px;top:770px;width:75px;height:25px;line-height:22px;letter-spacing:-0.424px">Close</div>
<div class="win" style="left:440px;top:161px;width:1000px;height:596px"><div class="title" style="background:#0a246a;letter-spacing:0.478px">Camera registration<i class="close"><svg width="9" height="9" style="position:absolute;left:0;top:0"><path d="M1.500 2L6.500 7.500M6.500 2L1.500 7.500" stroke="#000" stroke-width="1.100"/></svg></i></div></div>
<div class="btn" style="left:451px;top:188px;width:201px;height:25px;line-height:22px;letter-spacing:-0.354px">Close all</div>
<div class="abs" style="left:451px;top:219px;width:201px;height:526px;background:#d4d0c8;border:1px solid;border-color:#808080 #fff #fff #808080;box-shadow:inset 1px 1px 0 #404040,inset -1px -1px 0 #d4d0c8"></div>
<div class="abs" id="sidec" style="left:0;top:0;width:1491px;height:743px;overflow:hidden;clip-path:inset(221px 841px 0 453px)"><div class="grp" style="top:222px;height:138px"></div>
<div class="gh" style="top:222px"><svg width="7" height="9" viewBox="0 0 7 9" class="chev"><path d="M0.5 0.7L3.5 3.7L6.5 0.7M0.5 4.7L3.5 7.7L6.5 4.7" fill="none" stroke="#8490a4" stroke-width="1.5"/></svg><span style="letter-spacing:0.44px">Camera</span></div>
<div class="it sel" style="top:241px;letter-spacing:-0.304px">General</div>
<div class="it" style="top:265px;letter-spacing:-0.463px">Lens</div>
<div class="it" style="top:289px;letter-spacing:-0.045px">Motion detection</div>
<div class="it" style="top:313px;letter-spacing:-0.227px">Audio</div>
<div class="it" style="top:337px;letter-spacing:0.007px">Image filters</div>
<div class="grp" style="top:361px;height:90px"></div>
<div class="gh" style="top:361px"><svg width="7" height="9" viewBox="0 0 7 9" class="chev"><path d="M0.5 0.7L3.5 3.7L6.5 0.7M0.5 4.7L3.5 7.7L6.5 4.7" fill="none" stroke="#8490a4" stroke-width="1.5"/></svg><span style="letter-spacing:0.468px">Streaming</span></div>
<div class="it" style="top:380px;letter-spacing:-0.177px">Media profiles</div>
<div class="it" style="top:404px;letter-spacing:-0.237px">Recording</div>
<div class="it" style="top:428px;letter-spacing:-0.138px">Live view</div>
<div class="grp" style="top:452px;height:114px"></div>
<div class="gh" style="top:452px"><svg width="7" height="9" viewBox="0 0 7 9" class="chev"><path d="M0.5 0.7L3.5 3.7L6.5 0.7M0.5 4.7L3.5 7.7L6.5 4.7" fill="none" stroke="#8490a4" stroke-width="1.5"/></svg><span style="letter-spacing:0.29px">Recording</span></div>
<div class="it" style="top:471px;letter-spacing:-0.093px">Settings</div>
<div class="it" style="top:495px;letter-spacing:-0.186px">Edge recording</div>
<div class="it" style="top:519px;letter-spacing:0.017px">Metadata</div>
<div class="it" style="top:543px;letter-spacing:-0.138px">Archiving</div>
<div class="grp" style="top:567px;height:42px"></div>
<div class="gh" style="top:567px"><svg width="7" height="9" viewBox="0 0 7 9" class="chev"><path d="M0.5 0.7L3.5 3.7L6.5 0.7M0.5 4.7L3.5 7.7L6.5 4.7" fill="none" stroke="#8490a4" stroke-width="1.5"/></svg><span style="letter-spacing:0.297px">Rights</span></div>
<div class="it" style="top:586px;letter-spacing:-0.345px">Users</div>
<div class="grp" style="top:610px;height:162px"></div>
<div class="gh" style="top:610px"><svg width="7" height="9" viewBox="0 0 7 9" class="chev"><path d="M0.5 0.7L3.5 3.7L6.5 0.7M0.5 4.7L3.5 7.7L6.5 4.7" fill="none" stroke="#8490a4" stroke-width="1.5"/></svg><span style="letter-spacing:-0.258px">PTZ</span></div>
<div class="it" style="top:629px;letter-spacing:-0.093px">Settings</div>
<div class="it" style="top:653px;letter-spacing:-0.184px">Presets</div>
<div class="it" style="top:677px;letter-spacing:-0.357px">PTZ Patrol</div>
<div class="it" style="top:701px;letter-spacing:-0.063px">Auxiliary</div>
<div class="it" style="top:725px;letter-spacing:-0.14px">Joystick</div>
<div class="it" style="top:749px;letter-spacing:0.5px"></div></div>
<div class="abs" style="left:634px;top:221px;width:16px;height:522px;background-image:conic-gradient(#fff 25%,#d4d0c8 0 50%,#fff 0 75%,#d4d0c8 0);background-size:2px 2px"></div>
<div class="btn sb" style="left:634px;top:221px;width:16px;height:16px"><svg width="14" height="14" style="position:absolute;left:0;top:0"><path d="M3 8.500L6.500 5L10 8.500Z" fill="#000"/></svg></div>
<div class="btn sb" style="left:634px;top:237px;width:16px;height:294px"></div>
<div class="btn sb" style="left:634px;top:727px;width:16px;height:16px"><svg width="14" height="14" style="position:absolute;left:0;top:0"><path d="M3 5.500L6.500 9L10 5.500Z" fill="#000"/></svg></div>
<div class="page" style="left:658px;top:208px;width:772px;height:506px"></div>
<div class="tab" style="left:658px;top:188px;width:53px;height:22px;padding:4px 0 0 7px;letter-spacing:-0.304px">General</div>
<svg class="abs" style="left:670px;top:225px" width="32" height="20"><use href="#i_cam_big"/></svg>
<span class="lbl" style="left:709px;top:229px;letter-spacing:-0.166px">General camera settings</span>
<div class="abs" style="left:670px;top:262px;width:748px;height:2px;border-top:1px solid #808080;border-bottom:1px solid #fff"></div>
<span class="lbl" style="left:671px;top:278px;letter-spacing:-0.336px">Camera name</span>
<div class="ed" style="left:671px;top:292px;width:193px;height:21px;line-height:18px;letter-spacing:0.021px">verso</div>
<span class="lbl" style="left:869px;top:278px;letter-spacing:-0.187px">Camera description</span>
<div class="ed" style="left:870px;top:292px;width:548px;height:21px;line-height:18px;letter-spacing:0.021px">verso</div>
<span class="lbl" style="left:669px;top:322px;letter-spacing:0.016px">Manufacturer</span>
<div class="ed" style="left:670px;top:336px;width:193px;height:21px;line-height:18px;letter-spacing:-0.53px">2N</div>
<i class="dd" style="left:845px;top:338px;height:17px"></i>
<span class="lbl" style="left:868px;top:340px;letter-spacing:-0.256px">2N Telecommunications.</span>
<span class="lbl" style="left:669px;top:364px;letter-spacing:-0.345px">Camera model</span>
<div class="ed" style="left:670px;top:378px;width:318px;height:21px;line-height:18px;letter-spacing:-0.267px">Helios IP Verso</div>
<i class="dd" style="left:970px;top:380px;height:17px"></i>
<span class="lbl" style="left:993px;top:363px;letter-spacing:-0.229px">Firmware</span>
<div class="ed" style="left:994px;top:377px;width:263px;height:21px;line-height:18px;letter-spacing:0.01px">2.20.0.29.5 or greater</div>
<i class="dd" style="left:1239px;top:379px;height:17px"></i>
<span class="lbl" style="left:669px;top:406px;letter-spacing:-0.236px">Camera address</span>
<div class="ed" style="left:670px;top:422px;width:289px;height:21px;line-height:18px;letter-spacing:-0.099px">10.27.24.9</div>
<div class="btn" style="left:965px;top:421px;width:23px;height:22px"><svg width="21" height="21" style="position:absolute;left:0;top:0"><path d="M4.5 8.5H13.5V6.5L18.5 10L13.5 13.5V11.5H4.500Z" fill="#f6c48a" stroke="#dd7a14" stroke-width="1"/></svg></div>
<span class="lbl" style="left:993px;top:406px;letter-spacing:0.023px">Port (80)</span>
<div class="ed" style="left:994px;top:421px;width:125px;height:22px;line-height:18px;letter-spacing:-0.117px">80</div>
<span class="lbl" style="left:1124px;top:406px;letter-spacing:-0.306px">User</span>
<div class="ed" style="left:1125px;top:422px;width:132px;height:21px;line-height:18px;letter-spacing:-0.392px">admin</div>
<span class="lbl" style="left:1262px;top:406px;letter-spacing:-0.287px">Password</span>
<div class="ed" style="left:1263px;top:422px;width:126px;height:21px;line-height:18px;letter-spacing:1.719px">*****</div>
<div class="btn" style="left:1394px;top:422px;width:23px;height:21px"><svg width="15" height="15" viewBox="0 0 20 20" style="position:absolute;left:3px;top:2px;overflow:visible"><ellipse cx="10" cy="10.500" rx="11" ry="4.200" transform="rotate(-32 10 10.500)" fill="none" stroke="#5a86d0" stroke-width="1.400"/><path d="M15.600 14.600A6.400 6.400 0 1 1 16.800 10.800H6" fill="none" stroke="url(#gIE2)" stroke-width="4.300"/><path d="M1.200 17.600C0.200 15.600 1.800 12.800 3.600 11C3 13.400 3.400 15.600 5.200 16.800C3.800 17.800 2 18.400 1.200 17.600Z" fill="#4a78c8"/></svg></div>
<span class="lbl" style="left:669px;top:452px;letter-spacing:-0.087px">Camera shortcut</span>
<div class="ed" style="left:670px;top:466px;width:449px;height:21px;line-height:18px;letter-spacing:0px"></div>
<span class="lbl" style="left:1124px;top:452px;letter-spacing:-0.018px">Latitude</span>
<div class="ed" style="left:1125px;top:466px;width:132px;height:21px;line-height:18px;letter-spacing:-0.11px">0.000000</div>
<span class="lbl" style="left:1262px;top:452px;letter-spacing:-0.147px">Longitude</span>
<div class="ed" style="left:1263px;top:466px;width:126px;height:21px;line-height:18px;letter-spacing:-0.11px">0.000000</div>
<div class="btn" style="left:1393px;top:466px;width:24px;height:21px"><div style="position:absolute;left:4px;top:3px;width:14px;height:14px;background:#b8281e"><svg width="14" height="14" style="position:absolute;left:0;top:0"><circle cx="7" cy="5" r="2.300" fill="#b8281e" stroke="#fff" stroke-width="1.700"/><path d="M7 7.500V12" stroke="#fff" stroke-width="2"/></svg></div></div>
<span class="lbl" style="left:669px;top:496px;letter-spacing:-0.072px">Recording directory</span>
<div class="ed" style="left:670px;top:510px;width:559px;height:21px;line-height:18px;letter-spacing:-0.122px">C:\DIGIFORT\zaznam\verso<i style="display:inline-block;width:1px;height:13px;background:#000;vertical-align:-3px"></i></div>
<svg class="abs" style="left:1237px;top:512px" width="18" height="18"><use href="#i_treeico"/></svg>
<span class="lbl" style="left:1262px;top:496px;letter-spacing:-0.122px">Connection timeout (ms)</span>
<div class="ed" style="left:1263px;top:510px;width:154px;height:22px;line-height:18px;letter-spacing:-0.117px">30000</div>
<div class="abs" style="left:1100px;top:424px;width:1px;height:13px;background:#808080"></div>
<div class="btn" style="left:1101px;top:423px;width:15px;height:8px"><svg width="13" height="6" style="position:absolute;left:0;top:0"><path d="M3 5.500L6.500 2L10 5.500Z" fill="#000"/></svg></div>
<div class="btn" style="left:1101px;top:431px;width:15px;height:9px"><svg width="13" height="7" style="position:absolute;left:0;top:0"><path d="M3 1L6.500 4.500L10 1Z" fill="#000"/></svg></div>
<div class="abs" style="left:1398px;top:513px;width:1px;height:13px;background:#808080"></div>
<div class="btn" style="left:1399px;top:512px;width:15px;height:8px"><svg width="13" height="6" style="position:absolute;left:0;top:0"><path d="M3 5.500L6.500 2L10 5.500Z" fill="#000"/></svg></div>
<div class="btn" style="left:1399px;top:520px;width:15px;height:9px"><svg width="13" height="7" style="position:absolute;left:0;top:0"><path d="M3 1L6.500 4.500L10 1Z" fill="#000"/></svg></div>
<div class="ed" style="left:670px;top:539px;width:13px;height:13px;padding:0"><svg width="11" height="11" style="position:absolute;left:0;top:0"><path d="M2 4L4.500 6.500L9 2V5L4.500 9.500L2 7Z" fill="#000"/></svg></div>
<span class="lbl" style="left:688px;top:539px;letter-spacing:-0.057px">Activate camera</span>
<div class="abs" style="left:1272px;top:720px;width:75px;height:25px;border:1px solid #000"></div>
<div class="btn" style="left:1273px;top:721px;width:73px;height:23px;line-height:20px;letter-spacing:-0.947px">OK</div>
<div class="btn" style="left:1354px;top:720px;width:75px;height:25px;line-height:22px;letter-spacing:-0.373px">Cancel</div>
</div></body></html>
